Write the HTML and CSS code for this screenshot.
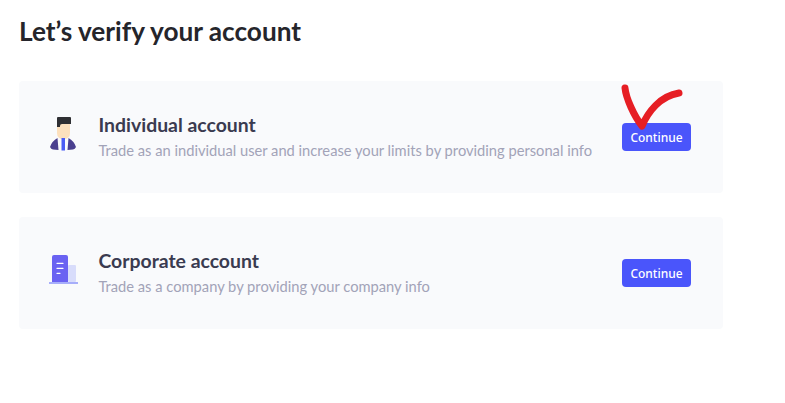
FILE: index.html
```
<!DOCTYPE html>
<html lang="en">
<head>
<meta charset="utf-8">
<title>Verify account</title>
<link rel="stylesheet" href="styles.css">
</head>
<body>
<main class="page">
  <h1 class="title">Let’s verify your account</h1>
  <section class="card">
    <svg class="icon" viewBox="0 0 32 40" aria-hidden="true">
      <path fill="#fde0bd" d="M9 3h13v13q0 6-6.500 6T9 16z"/>
      <path fill="#2f2f33" d="M9 10V1q0-1 1-1h12q1 0 1 1v6h-9q-2 0-2 2v1z"/>
      <path fill="#4a3f8f" d="M9.500 21Q4 24 2 30q1 2 3 2.500l5.500 .5zM20.500 21q5.500 3 7.500 9-1 2-3 2.500l-5.500 .5z"/>
      <path fill="#4a5cf5" d="M13.500 21h3.500v12.500h-3.500z"/>
    </svg>
    <div class="info">
      <h2 class="name">Individual account</h2>
      <p class="desc">Trade as an individual user and increase your limits by providing personal info</p>
    </div>
    <button class="btn">Continue</button>
    <svg class="mark" viewBox="0 0 70 50" aria-hidden="true">
      <path fill="none" stroke="#e61e24" stroke-width="7" stroke-linecap="round" stroke-linejoin="round" d="M5 4C6 14 14 32 22 42C28 28 40 12 59 9"/>
    </svg>
  </section>
  <section class="card">
    <svg class="icon" viewBox="0 0 32 40" aria-hidden="true">
      <rect x="20" y="12" width="8" height="17" rx="1" fill="#d8dcfb"/>
      <path fill="#6a62f2" d="M4 4q0-2 2-2h12q2 0 2 2v25H4z"/>
      <path fill="#a7aefa" d="M1 29h29v2H1z"/>
      <path stroke="#fff" stroke-width="1.300" stroke-linecap="round" d="M9 10.300h6M9 15.300h6M9 20.300h3"/>
    </svg>
    <div class="info">
      <h2 class="name">Corporate account</h2>
      <p class="desc">Trade as a company by providing your company info</p>
    </div>
    <button class="btn">Continue</button>
  </section>
</main>
</body>
</html>
```
FILE: styles.css
```
* { box-sizing: border-box; }
html, body { margin: 0; background: #fff; }
body { font-family: "Lato", "Noto Sans", sans-serif; }
.page { width: 704px; margin-left: 19px; padding-top: 15px; position: relative; }
.title { margin: 0 0 34px; font-size: 26.200px; line-height: 32px; font-weight: 700; color: #25252b; }
.card { position: relative; height: 112px; margin-bottom: 24px; padding: 0 32px 0 29px; background: #f9fafc; border-radius: 4px; display: flex; align-items: center; }
.icon { width: 32px; height: 40px; flex: none; margin-right: 18.500px; }
.info { flex: 1; min-width: 0; padding-bottom: 1px; }
.name { margin: 0 0 3px; font-size: 19.400px; line-height: 24px; font-weight: 700; color: #3a3b50; }
.desc { margin: 0; font-size: 14.700px; line-height: 20px; color: #a2a3b8; }
.btn { width: 69px; height: 28px; padding: 0; border: 0; border-radius: 4px; background: #4a55fb; color: #fff; font: 500 12px/30px "Noto Sans", sans-serif; }
.mark { position: absolute; left: 601px; top: 3px; width: 70px; height: 50px; }
```
